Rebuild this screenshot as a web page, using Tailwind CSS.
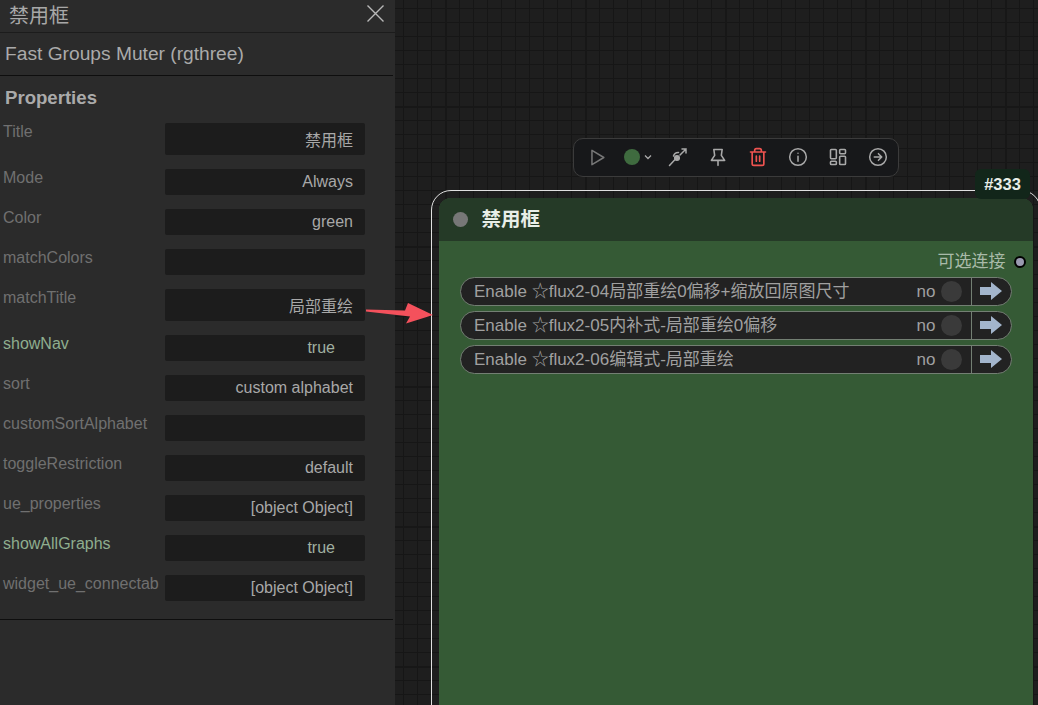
<!DOCTYPE html>
<html lang="zh">

<head>
    <meta charset="UTF-8">
    <script src="https://cdn.jsdelivr.net/npm/@tailwindcss/browser@4"></script>
    <title>Fast Groups Muter</title>
</head>

<body class="relative w-[1038px] h-[705px] overflow-hidden flex bg-[#1f1f1f] font-['Liberation_Sans','Noto_Sans_CJK_SC',sans-serif]">

    <!-- Panel de propiedades -->
    <aside class="w-[395px] h-full shrink-0 bg-[#2b2b2b] flex flex-col">
        <div class="h-[33px] flex items-center justify-between pl-[9px] pr-[11px] border-b border-[#1c1c1c]">
            <span class="text-[20px] text-[#a8a8a8]">禁用框</span>
            <svg class="w-[17px] h-[17px] text-[#b8b8b8] -mt-[6px]" viewBox="0 0 17 17" fill="none" stroke="currentColor" stroke-width="1.4"><path d="M.5.5l16 16M16.500.5l-16 16" /></svg>
        </div>
        <div class="h-[43px] flex items-center pl-[5px] border-b border-[#0e0e0e] mr-[2px] text-[19.2px] text-[#aaaaaa]">Fast Groups Muter (rgthree)</div>
        <h2 class="pl-[5px] mt-[10px] text-[18.6px] leading-[24px] font-bold text-[#aaaaaa]">Properties</h2>

        <div class="mt-[13px] flex flex-col gap-[14px] pl-[3px] pb-[18px] border-b border-[#0e0e0e] mr-[2px]">
            <div class="flex h-[32px]">
                <span class="w-[162px] text-[16px] leading-[18px] text-[#707070]">Title</span>
                <span class="w-[200px] rounded-[2px] bg-[#1c1c1c] flex items-center justify-end pr-[12px] pt-[3px] text-[16px] text-[#a8a8a8]">禁用框</span>
            </div>
            <div class="flex h-[26px]">
                <span class="w-[162px] text-[16px] leading-[18px] text-[#707070]">Mode</span>
                <span class="w-[200px] rounded-[2px] bg-[#1c1c1c] flex items-center justify-end pr-[12px] text-[16px] text-[#a8a8a8]">Always</span>
            </div>
            <div class="flex h-[26px]">
                <span class="w-[162px] text-[16px] leading-[18px] text-[#707070]">Color</span>
                <span class="w-[200px] rounded-[2px] bg-[#1c1c1c] flex items-center justify-end pr-[12px] text-[16px] text-[#a8a8a8]">green</span>
            </div>
            <div class="flex h-[26px]">
                <span class="w-[162px] text-[16px] leading-[18px] text-[#707070]">matchColors</span>
                <span class="w-[200px] rounded-[2px] bg-[#1c1c1c]"></span>
            </div>
            <div class="flex h-[32px]">
                <span class="w-[162px] text-[16px] leading-[18px] text-[#707070]">matchTitle</span>
                <span class="w-[200px] rounded-[2px] bg-[#1c1c1c] flex items-center justify-end pr-[12px] pt-[3px] text-[16px] text-[#a8a8a8]">局部重绘</span>
            </div>
            <div class="flex h-[26px]">
                <span class="w-[162px] text-[16px] leading-[18px] text-[#8fae8f]">showNav</span>
                <span class="w-[200px] rounded-[2px] bg-[#1c1c1c] flex items-center justify-end pr-[30px] text-[16px] text-[#a0b0a0]">true</span>
            </div>
            <div class="flex h-[26px]">
                <span class="w-[162px] text-[16px] leading-[18px] text-[#707070]">sort</span>
                <span class="w-[200px] rounded-[2px] bg-[#1c1c1c] flex items-center justify-end pr-[12px] text-[16px] text-[#a8a8a8]">custom alphabet</span>
            </div>
            <div class="flex h-[26px]">
                <span class="w-[162px] text-[16px] leading-[18px] text-[#707070]">customSortAlphabet</span>
                <span class="w-[200px] rounded-[2px] bg-[#1c1c1c]"></span>
            </div>
            <div class="flex h-[26px]">
                <span class="w-[162px] text-[16px] leading-[18px] text-[#707070]">toggleRestriction</span>
                <span class="w-[200px] rounded-[2px] bg-[#1c1c1c] flex items-center justify-end pr-[12px] text-[16px] text-[#a8a8a8]">default</span>
            </div>
            <div class="flex h-[26px]">
                <span class="w-[162px] text-[16px] leading-[18px] text-[#707070]">ue_properties</span>
                <span class="w-[200px] rounded-[2px] bg-[#1c1c1c] flex items-center justify-end pr-[12px] text-[16px] text-[#a8a8a8]">[object Object]</span>
            </div>
            <div class="flex h-[26px]">
                <span class="w-[162px] text-[16px] leading-[18px] text-[#8fae8f]">showAllGraphs</span>
                <span class="w-[200px] rounded-[2px] bg-[#1c1c1c] flex items-center justify-end pr-[30px] text-[16px] text-[#a0b0a0]">true</span>
            </div>
            <div class="flex h-[26px]">
                <span class="w-[162px] text-[16px] leading-[18px] text-[#707070] whitespace-nowrap">widget_ue_connectab</span>
                <span class="w-[200px] rounded-[2px] bg-[#1c1c1c] flex items-center justify-end pr-[12px] text-[16px] text-[#a8a8a8]">[object Object]</span>
            </div>
        </div>
    </aside>

    <!-- Lienzo -->
    <main class="relative flex-1 overflow-hidden bg-[#1e1e1e] bg-[linear-gradient(#171717_2px,transparent_2px),linear-gradient(90deg,#171717_2px,transparent_2px),linear-gradient(#161616_1px,transparent_1px),linear-gradient(90deg,#161616_1px,transparent_1px)] bg-[size:140px_140px,140px_140px,14px_14px,14px_14px] bg-[position:50px_106px,50px_106px,8px_8px,8px_8px]">

        <!-- Barra de herramientas -->
        <div class="absolute left-[178px] top-[138px] w-[326px] h-[39px] flex items-center pl-[3px] pb-[1px] rounded-[10px] border border-[#3b3b3b] bg-[#17181a] text-[#a9a9a9]">
            <span class="w-[40px] flex justify-center">
                <svg class="w-[19px] h-[19px] text-[#777777]" viewBox="0 0 24 24" fill="none" stroke="currentColor" stroke-width="1.9" stroke-linejoin="round"><path d="M5 3v18l15-9z" /></svg>
            </span>
            <span class="w-[36px] flex items-center justify-end gap-[3px]">
                <span class="w-[16px] h-[16px] rounded-full bg-[#3f6b3f]"></span>
                <svg class="w-[10px] h-[10px]" viewBox="0 0 10 10" fill="none" stroke="currentColor" stroke-width="1.3"><path d="M2 3.500l3 3 3-3" /></svg>
            </span>
            <span class="w-[50px] flex justify-center">
                <svg class="w-[20px] h-[20px]" viewBox="0 0 20 20" fill="none" stroke="currentColor" stroke-width="1.500" stroke-linecap="round"><path d="M1.500 18.500l6-6.500M12 8l6-6M14 2h4v4" /><circle cx="9" cy="11" r="2.300" fill="currentColor" /><path d="M5.500 9a5 5 0 0 1 5-3.500" /></svg>
            </span>
            <span class="w-[30px] flex justify-center">
                <svg class="w-[20px] h-[20px]" viewBox="0 0 24 24" fill="none" stroke="currentColor" stroke-width="1.900" stroke-linecap="round" stroke-linejoin="round"><path d="M12 16v6M7 3h10l-1 7 4 6H4l4-6z" /></svg>
            </span>
            <span class="w-[50px] flex justify-center">
                <svg class="w-[20px] h-[20px] text-[#ef5350]" viewBox="0 0 24 24" fill="none" stroke="currentColor" stroke-width="2" stroke-linecap="round" stroke-linejoin="round"><path d="M3 6h18M19 6v14a2 2 0 0 1-2 2H7a2 2 0 0 1-2-2V6M8 6V4a2 2 0 0 1 2-2h4a2 2 0 0 1 2 2v2M10 11v6M14 11v6" /></svg>
            </span>
            <span class="w-[30px] flex justify-center">
                <svg class="w-[20px] h-[20px]" viewBox="0 0 24 24" fill="none" stroke="currentColor" stroke-width="1.800" stroke-linecap="round"><circle cx="12" cy="12" r="10" /><path d="M12 17v-6M12 7.500v.01" /></svg>
            </span>
            <span class="w-[50px] flex justify-center">
                <svg class="w-[20px] h-[20px]" viewBox="0 0 24 24" fill="none" stroke="currentColor" stroke-width="1.900" stroke-linejoin="round"><rect x="3" y="3" width="7" height="11" rx="1" /><rect x="14" y="3" width="7" height="5" rx="1" /><rect x="14" y="11" width="7" height="10" rx="1" /><rect x="3" y="17" width="7" height="4" rx="1" /></svg>
            </span>
            <span class="w-[30px] flex justify-center">
                <svg class="w-[20px] h-[20px]" viewBox="0 0 24 24" fill="none" stroke="currentColor" stroke-width="1.800" stroke-linecap="round" stroke-linejoin="round"><circle cx="12" cy="12" r="10" /><path d="M7.500 12h9M12.500 8l4 4-4 4" /></svg>
            </span>
        </div>

        <!-- Nodo -->
        <div class="absolute left-[36px] top-[190px] w-[610px] h-[600px] rounded-[20px] border-[1.5px] border-[#e0e0e0] pl-[6.5px] pt-[6.5px]">
            <div class="w-[594px] h-full rounded-[12px] bg-[#355a35] overflow-hidden">
                <div class="h-[43px] flex items-center gap-[14px] pl-[14px] pt-[1px] bg-[#253a27]">
                    <span class="w-[15px] h-[15px] rounded-full bg-[#777777]"></span>
                    <span class="text-[19.5px] font-bold text-[#e8eee8]">禁用框</span>
                </div>
                <div class="flex items-center justify-end h-[40px] pr-[7px] pt-[3px] gap-[8px] text-[17px] text-[#a9baa9]">
                    <span>可选连接</span>
                    <span class="w-[12px] h-[12px] rounded-full bg-[#9a9ab0] border-2 border-black"></span>
                </div>
                <div class="-mt-[4px] flex flex-col gap-[5px] pl-[21px] w-[573px]">
                    <div class="h-[29px] flex items-center rounded-full bg-[#222222] border-[1.5px] border-[#737f73] text-[17px] text-[#a0a0a0]">
                        <span class="flex-1 pl-[13.5px] pt-[1px] whitespace-nowrap">Enable ☆flux2-04局部重绘0偏移+缩放回原图尺寸</span>
                        <span class="mr-[5px] pt-[1px]">no</span>
                        <span class="w-[21px] h-[21px] rounded-full bg-[#3a3a3a] mr-[9px]"></span>
                        <span class="w-[40px] h-full flex items-center pl-[8px] border-l-[1.5px] border-[#737f73]">
                            <svg class="w-[22px] h-[18px] text-[#a3b5cc]" viewBox="0 0 22 18" fill="currentColor"><path d="M0 5h11V0l11 9-11 9v-5H0z" /></svg>
                        </span>
                    </div>
                    <div class="h-[29px] flex items-center rounded-full bg-[#222222] border-[1.5px] border-[#737f73] text-[17px] text-[#a0a0a0]">
                        <span class="flex-1 pl-[13.5px] pt-[1px] whitespace-nowrap">Enable ☆flux2-05内补式-局部重绘0偏移</span>
                        <span class="mr-[5px] pt-[1px]">no</span>
                        <span class="w-[21px] h-[21px] rounded-full bg-[#3a3a3a] mr-[9px]"></span>
                        <span class="w-[40px] h-full flex items-center pl-[8px] border-l-[1.5px] border-[#737f73]">
                            <svg class="w-[22px] h-[18px] text-[#a3b5cc]" viewBox="0 0 22 18" fill="currentColor"><path d="M0 5h11V0l11 9-11 9v-5H0z" /></svg>
                        </span>
                    </div>
                    <div class="h-[29px] flex items-center rounded-full bg-[#222222] border-[1.5px] border-[#737f73] text-[17px] text-[#a0a0a0]">
                        <span class="flex-1 pl-[13.5px] pt-[1px] whitespace-nowrap">Enable ☆flux2-06编辑式-局部重绘</span>
                        <span class="mr-[5px] pt-[1px]">no</span>
                        <span class="w-[21px] h-[21px] rounded-full bg-[#3a3a3a] mr-[9px]"></span>
                        <span class="w-[40px] h-full flex items-center pl-[8px] border-l-[1.5px] border-[#737f73]">
                            <svg class="w-[22px] h-[18px] text-[#a3b5cc]" viewBox="0 0 22 18" fill="currentColor"><path d="M0 5h11V0l11 9-11 9v-5H0z" /></svg>
                        </span>
                    </div>
                </div>
            </div>
        </div>

        <!-- Insignia -->
        <span class="absolute left-[580px] top-[169px] h-[30px] w-[55px] rounded-[6px] bg-[#12261a] flex items-center justify-center text-[16.5px] font-bold text-[#e8eee8]">#333</span>
    </main>

    <!-- Flecha sobre el panel y el lienzo -->
    <svg class="absolute left-[366px] top-[303px] w-[67px] h-[22px]" viewBox="0 0 67 22"><path d="M0 6.500v2l44 5-4 7 27-8.500L42 0l-3 7.500z" fill="#f4515c" /></svg>
</body>

</html>
